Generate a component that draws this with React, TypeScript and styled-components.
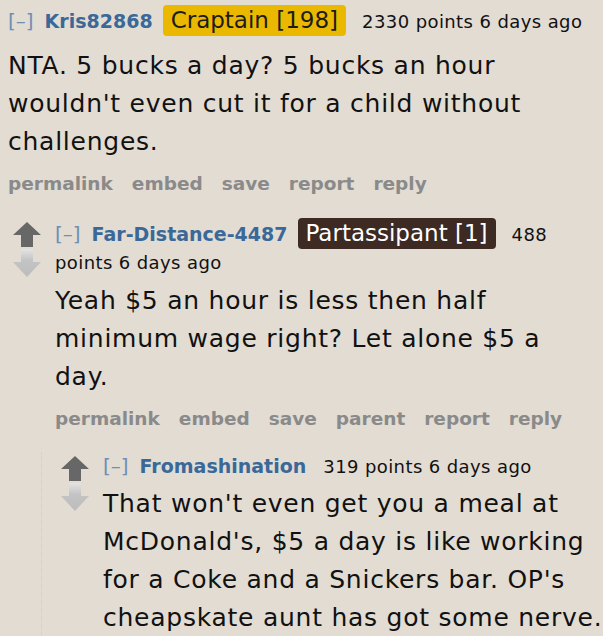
import styled, { createGlobalStyle } from 'styled-components';

const GlobalStyle = createGlobalStyle`
  html, body {
    margin: 0;
    padding: 0;
    background: #e2dcd3;
  }
  body {
    font-family: "DejaVu Sans", Verdana, sans-serif;
    color: #111;
  }
`;

type Flair = { text: string; tone: 'gold' | 'brown' };

type CommentData = {
  author: string;
  flair?: Flair;
  points: number;
  age: string;
  body: string;
  bodyGap: number;
  buttons: string[];
};

const comments: CommentData[] = [
  {
    author: 'Kris82868',
    flair: { text: 'Craptain [198]', tone: 'gold' },
    points: 2330,
    age: '6 days ago',
    body: "NTA. 5 bucks a day? 5 bucks an hour wouldn't even cut it for a child without challenges.",
    bodyGap: 11,
    buttons: ['permalink', 'embed', 'save', 'report', 'reply'],
  },
  {
    author: 'Far-Distance-4487',
    flair: { text: 'Partassipant [1]', tone: 'brown' },
    points: 488,
    age: '6 days ago',
    body: 'Yeah $5 an hour is less then half minimum wage right? Let alone $5 a day.',
    bodyGap: 5,
    buttons: ['permalink', 'embed', 'save', 'parent', 'report', 'reply'],
  },
  {
    author: 'Fromashination',
    points: 319,
    age: '6 days ago',
    body: "That won't even get you a meal at McDonald's, $5 a day is like working for a Coke and a Snickers bar. OP's cheapskate aunt has got some nerve.",
    bodyGap: 4,
    buttons: [],
  },
];

export default function App() {
  const [top, reply, nested] = comments;
  return (
    <Page>
      <GlobalStyle />
      <Comment data={top} />
      <Thread>
        <Comment data={reply} voting />
        <Child>
          <Comment data={nested} voting />
        </Child>
      </Thread>
    </Page>
  );
}

function Comment({ data, voting }: { data: CommentData; voting?: boolean }) {
  return (
    <CommentRow>
      {voting && (
        <Votes>
          <UpArrow />
          <DownArrow />
        </Votes>
      )}
      <Entry>
        <Tagline>
          <Toggle>[–]</Toggle>
          <Author>{data.author}</Author>
          {data.flair && <Badge tone={data.flair.tone}>{data.flair.text}</Badge>}
          <Score>
            {data.points} points {data.age}
          </Score>
        </Tagline>
        <Body gap={data.bodyGap}>{data.body}</Body>
        {data.buttons.length > 0 && (
          <Buttons>
            {data.buttons.map((b) => (
              <ButtonLink key={b}>{b}</ButtonLink>
            ))}
          </Buttons>
        )}
      </Entry>
    </CommentRow>
  );
}

function UpArrow() {
  return (
    <svg width="28" height="25" viewBox="0 0 28 25">
      <path d="M14 0 L28 13 L20 13 L20 25 L8 25 L8 13 L0 13 Z" fill="#676767" />
    </svg>
  );
}

function DownArrow() {
  return (
    <svg width="28" height="29" viewBox="0 0 28 29">
      <defs>
        <linearGradient id="dn" x1="0" y1="0" x2="0" y2="1">
          <stop offset="0" stopColor="#e4e4e4" />
          <stop offset="0.4" stopColor="#c4c4c4" />
          <stop offset="1" stopColor="#bcbcbc" />
        </linearGradient>
      </defs>
      <path d="M8 0 L20 0 L20 13 L28 13 L14 28 L0 13 L8 13 Z" fill="url(#dn)" />
    </svg>
  );
}

const Page = styled.div`
  padding: 5px 0 0 8px;
`;

const Thread = styled.div`
  margin-top: 20px;
  padding-left: 5px;
`;

const Child = styled.div`
  margin-left: 28px;
  margin-top: 19px;
  padding-left: 19px;
  border-left: 1px dotted #c9c9e6;
`;

const CommentRow = styled.div`
  display: flex;
  align-items: flex-start;
`;

const Votes = styled.div`
  display: flex;
  flex-direction: column;
  gap: 2px;
  width: 28px;
  margin-top: 4px;
  margin-right: 14px;
  flex: none;
`;

const Entry = styled.div`
  flex: 1;
  min-width: 0;
`;

const Tagline = styled.div`
  font-size: 18px;
  line-height: 28px;
  color: #111;
`;

const Toggle = styled.span`
  color: #6e8fb4;
  font-size: 20px;
  margin-right: 11px;
`;

const Author = styled.span`
  color: #3a6898;
  font-weight: bold;
  font-size: 19px;
  margin-right: 7px;
`;

const Badge = styled.span<{ tone: 'gold' | 'brown' }>`
  display: inline-block;
  padding: 0 8px;
  border-radius: 4px;
  font-size: 23px;
  line-height: 31px;
  margin: 0 6px 0 3px;
  background: ${(p) => (p.tone === 'gold' ? '#ebb800' : '#3c2a23')};
  color: ${(p) => (p.tone === 'gold' ? '#1c1c1c' : '#ffffff')};
`;

const Score = styled.span`
  margin-left: 10px;
  letter-spacing: 0.4px;
`;

const Body = styled.p<{ gap: number }>`
  margin: ${(p) => p.gap}px 0 0;
  max-width: 540px;
  font-size: 25px;
  line-height: 38px;
  letter-spacing: 0.75px;
`;

const Buttons = styled.div`
  display: flex;
  gap: 19px;
  margin-top: 9px;
  font-size: 18.5px;
  line-height: 28px;
`;

const ButtonLink = styled.span`
  color: #8a8a8a;
  font-weight: bold;
`;
